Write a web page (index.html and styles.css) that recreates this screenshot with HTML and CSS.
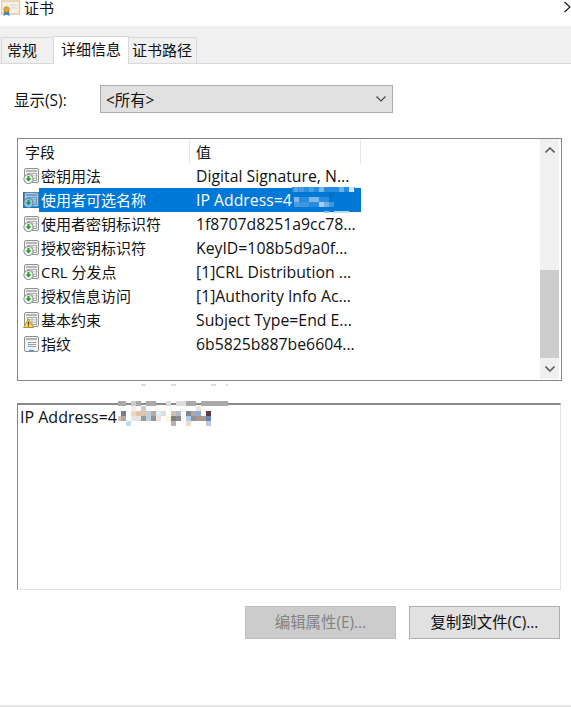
FILE: index.html
```html
<!DOCTYPE html>
<html lang="zh-CN">
<head>
    <meta charset="UTF-8">
    <meta name="viewport" content="width=device-width, initial-scale=1.0">
    <title>证书</title>
    <link rel="stylesheet" href="styles.css">
</head>
<body>

    <svg class="defs" width="0" height="0">
        <symbol id="doc" viewBox="0 0 16 16">
            <rect x="1.5" y="0.5" width="14" height="14" rx="1.5" fill="#f4f4f4" stroke="#8f8f8f"/>
            <rect x="3" y="2" width="11" height="2" fill="#b4b4b4"/>
            <rect x="4.5" y="5.5" width="9" height="7" fill="#fff" stroke="#a6a6a6"/>
            <path d="M4.5 7.8h9M4.5 10.2h9M9 5.5v7" stroke="#b4b4b4"/>
        </symbol>
        <symbol id="cert-ok" viewBox="0 0 16 16">
            <use href="#doc" width="16" height="16"/>
            <circle cx="5.5" cy="11" r="4.6" fill="#f2f7ef" stroke="#7f8a80"/>
            <path d="M5.5 7.8v3" stroke="#1f9a2e" stroke-width="2"/>
            <path d="M2.6 10.2h5.8L5.5 13.6z" fill="#1f9a2e"/>
        </symbol>
        <symbol id="cert-warn" viewBox="0 0 16 16">
            <use href="#doc" width="16" height="16"/>
            <path d="M5.5 6.8L10.4 15.5H0.6z" fill="#f8d648" stroke="#b8962a"/>
            <path d="M5.5 9.8v3M5.5 13.4v1.2" stroke="#333" stroke-width="1.2"/>
        </symbol>
        <symbol id="cert-plain" viewBox="0 0 16 16">
            <rect x="1.5" y="0.5" width="14" height="15" rx="1.5" fill="#f4f4f4" stroke="#8f8f8f"/>
            <rect x="3" y="2" width="11" height="2" fill="#b4b4b4"/>
            <path d="M5 6.5h8M5 8.5h8M5 10.5h8" stroke="#a0a0a0"/>
            <path d="M5 6.5h1M5 8.5h1M5 10.5h1" stroke="#38a8e0"/>
            <path d="M6 14.5h5" stroke="#38a8e0" stroke-width="1.4"/>
        </symbol>
    </svg>

    <header class="titlebar">
        <svg class="title-icon" width="20" height="16" viewBox="0 0 20 16">
            <rect x="0.5" y="1" width="18" height="13" fill="#f7f0e4" stroke="#e2c8a4" stroke-width="1.4"/>
            <path d="M9 5h7M9 8h7" stroke="#ddd" stroke-width="1.5"/>
            <path d="M3 11l-.5 5 3-1.5 3 1.5-.5-5z" fill="#3f7fc9"/>
            <circle cx="5.5" cy="9.5" r="2.8" fill="#e0a92a" stroke="#b57f1a" stroke-width=".6"/>
        </svg>
        <span class="title-text">证书</span>
        <svg class="close" width="7" height="12" viewBox="0 0 7 12">
            <path d="M0.5 1l5.5 5-5.5 5" fill="none" stroke="#111" stroke-width="1.1"/>
        </svg>
    </header>

    <nav class="tabs">
        <div class="tab">常规</div>
        <div class="tab active">详细信息</div>
        <div class="tab last">证书路径</div>
    </nav>

    <main class="content">
        <div class="show-row">
            <label class="show-label">显示(S):</label>
            <div class="select">
                <span>&lt;所有&gt;</span>
                <svg width="10" height="6" viewBox="0 0 10 6">
                    <path d="M0.5 0.5L5 5l4.5-4.5" fill="none" stroke="#444" stroke-width="1.1"/>
                </svg>
            </div>
        </div>

        <div class="list">
            <div class="list-body">
                <div class="list-head">
                    <div class="col-field">字段</div>
                    <div class="col-value">值</div>
                </div>
                <div class="row">
                    <svg class="row-icon"><use href="#cert-ok"/></svg>
                    <div class="col-field">密钥用法</div>
                    <div class="col-value">Digital Signature, N...</div>
                </div>
                <div class="row selected">
                    <svg class="row-icon"><use href="#cert-ok"/></svg>
                    <div class="cells">
                        <div class="col-field">使用者可选名称</div>
                        <div class="col-value">IP Address=4</div>
                    </div>
                </div>
                <div class="row">
                    <svg class="row-icon"><use href="#cert-ok"/></svg>
                    <div class="col-field">使用者密钥标识符</div>
                    <div class="col-value">1f8707d8251a9cc78...</div>
                </div>
                <div class="row">
                    <svg class="row-icon"><use href="#cert-ok"/></svg>
                    <div class="col-field">授权密钥标识符</div>
                    <div class="col-value">KeyID=108b5d9a0f...</div>
                </div>
                <div class="row">
                    <svg class="row-icon"><use href="#cert-ok"/></svg>
                    <div class="col-field">CRL 分发点</div>
                    <div class="col-value">[1]CRL Distribution ...</div>
                </div>
                <div class="row">
                    <svg class="row-icon"><use href="#cert-ok"/></svg>
                    <div class="col-field">授权信息访问</div>
                    <div class="col-value">[1]Authority Info Ac...</div>
                </div>
                <div class="row">
                    <svg class="row-icon"><use href="#cert-warn"/></svg>
                    <div class="col-field">基本约束</div>
                    <div class="col-value">Subject Type=End E...</div>
                </div>
                <div class="row">
                    <svg class="row-icon"><use href="#cert-plain"/></svg>
                    <div class="col-field">指纹</div>
                    <div class="col-value">6b5825b887be6604...</div>
                </div>
            </div>
            <div class="scrollbar">
                <div class="arrow">
                    <svg width="10" height="6" viewBox="0 0 10 6"><path d="M0.5 5.5L5 1l4.5 4.5" fill="none" stroke="#606060" stroke-width="1.6"/></svg>
                </div>
                <div class="track"></div>
                <div class="thumb"></div>
                <div class="arrow">
                    <svg width="10" height="6" viewBox="0 0 10 6"><path d="M0.5 0.5L5 5l4.5-4.5" fill="none" stroke="#606060" stroke-width="1.6"/></svg>
                </div>
            </div>
        </div>

        <div class="detail">IP Address=4</div>

        <div class="actions">
            <button class="btn" disabled>编辑属性(E)...</button>
            <button class="btn">复制到文件(C)...</button>
        </div>
    </main>

    <!-- blurred out parts of the address -->
    <svg class="mosaic mosaic-row" width="64" height="27" viewBox="0 0 64 27">
        <rect x="0" y="0" width="63" height="5" fill="#2a8cdc"/>
        <rect x="2" y="0" width="4" height="5" fill="#5aa5e3"/>
        <rect x="7" y="0" width="5" height="5" fill="#4a9de0"/>
        <rect x="17" y="0" width="5" height="5" fill="#4a9de0"/>
        <rect x="27" y="0" width="5" height="5" fill="#7db8e8"/>
        <rect x="47" y="0" width="5" height="5" fill="#6eb0e6"/>
        <rect x="57" y="0" width="5" height="5" fill="#cfe3f4"/>
        <rect x="37" y="5" width="5" height="5" fill="#0f6cc4"/>
        <rect x="2" y="10" width="5" height="5" fill="#7db8e8"/>
        <rect x="7" y="10" width="10" height="5" fill="#2a8cdc"/>
        <rect x="17" y="10" width="10" height="5" fill="#7db8e8"/>
        <rect x="27" y="10" width="10" height="5" fill="#2a8cdc"/>
        <rect x="2" y="15" width="5" height="5" fill="#4a9de0"/>
        <rect x="7" y="15" width="10" height="5" fill="#3f96de"/>
        <rect x="17" y="15" width="10" height="5" fill="#2a8cdc"/>
        <rect x="27" y="15" width="5" height="5" fill="#a8cdee"/>
        <rect x="32" y="15" width="5" height="5" fill="#6eb0e6"/>
        <rect x="37" y="15" width="5" height="5" fill="#3f96de"/>
        <rect x="32" y="24" width="5" height="2" fill="#8cc0ea"/>
        <rect x="42" y="24" width="15" height="2" fill="#bcdcf2"/>
    </svg>
    <svg class="mosaic mosaic-detail" width="112" height="45" viewBox="0 0 112 45">
        <g fill="#dcdcdc">
            <rect x="23" y="0" width="5" height="2"/>
            <rect x="53" y="0" width="5" height="2"/>
            <rect x="93" y="0" width="5" height="2"/>
            <rect x="108" y="0" width="2" height="2"/>
        </g>
        <rect x="0" y="17" width="8" height="5" fill="#a9a9a9"/>
        <rect x="13" y="17" width="5" height="5" fill="#cccccc"/>
        <rect x="18" y="17" width="5" height="5" fill="#a9a9a9"/>
        <rect x="28" y="17" width="10" height="5" fill="#a9a9a9"/>
        <rect x="48" y="17" width="5" height="5" fill="#dddddd"/>
        <rect x="58" y="17" width="10" height="5" fill="#dddddd"/>
        <rect x="68" y="17" width="10" height="5" fill="#a9a9a9"/>
        <rect x="83" y="17" width="27" height="5" fill="#a9a9a9"/>
        <rect x="13" y="22" width="5" height="5" fill="#f5efe6"/>
        <rect x="23" y="22" width="5" height="5" fill="#cccccc"/>
        <rect x="78" y="22" width="5" height="5" fill="#efe4d6"/>
        <rect x="3" y="27" width="5" height="5" fill="#777f85"/>
        <rect x="13" y="27" width="5" height="5" fill="#e9d9c8"/>
        <rect x="18" y="27" width="10" height="5" fill="#e3c4a8"/>
        <rect x="28" y="27" width="5" height="5" fill="#bcd0e0"/>
        <rect x="33" y="27" width="5" height="5" fill="#b5aaa0"/>
        <rect x="38" y="27" width="5" height="5" fill="#dcefff"/>
        <rect x="43" y="27" width="5" height="5" fill="#e0dcd6"/>
        <rect x="53" y="27" width="5" height="5" fill="#d8bcb0"/>
        <rect x="58" y="27" width="5" height="5" fill="#aebbc8"/>
        <rect x="68" y="27" width="5" height="5" fill="#7c8a92"/>
        <rect x="73" y="27" width="5" height="5" fill="#a8a8a8"/>
        <rect x="78" y="27" width="5" height="5" fill="#8fa8d4"/>
        <rect x="88" y="27" width="5" height="5" fill="#5a3d4e"/>
        <rect x="0" y="32" width="3" height="5" fill="#d9c7a8"/>
        <rect x="3" y="32" width="5" height="5" fill="#aaaaaa"/>
        <rect x="13" y="32" width="10" height="5" fill="#e4e4e4"/>
        <rect x="23" y="32" width="5" height="5" fill="#999999"/>
        <rect x="28" y="32" width="5" height="5" fill="#bcd0e0"/>
        <rect x="33" y="32" width="5" height="5" fill="#8a9499"/>
        <rect x="38" y="32" width="5" height="5" fill="#f3e2d8"/>
        <rect x="48" y="32" width="5" height="5" fill="#fbf6dc"/>
        <rect x="53" y="32" width="5" height="5" fill="#83807c"/>
        <rect x="58" y="32" width="5" height="5" fill="#8a8a92"/>
        <rect x="68" y="32" width="5" height="5" fill="#a8d0ea"/>
        <rect x="73" y="32" width="5" height="5" fill="#8a949c"/>
        <rect x="78" y="32" width="10" height="5" fill="#a89888"/>
        <rect x="88" y="32" width="5" height="5" fill="#6a84ac"/>
        <rect x="8" y="37" width="5" height="5" fill="#bcdcf2"/>
        <rect x="53" y="37" width="5" height="5" fill="#bfb0a8"/>
        <rect x="68" y="37" width="5" height="5" fill="#ecdcc8"/>
        <rect x="88" y="37" width="5" height="5" fill="#b8c8e0"/>
    </svg>

</body>
</html>
```

FILE: styles.css
```css
* {
    margin: 0;
    padding: 0;
    box-sizing: border-box;
}

body {
    position: relative;
    width: 571px;
    height: 707px;
    background: #fff;
    overflow: hidden;
    color: #111;
    font-family: "Open Sans", "Noto Sans CJK SC", sans-serif;
    font-size: 15px;
    border-bottom: 2px solid #e6e6e6;
}

.defs {
    position: absolute;
}

.titlebar {
    display: flex;
    align-items: flex-start;
    height: 26px;
}

.title-icon {
    margin-left: 1px;
}

.title-text {
    margin-left: 3px;
    line-height: 16px;
}

.close {
    margin-left: auto;
    margin-top: 1px;
}

.tabs {
    display: flex;
    align-items: flex-end;
    height: 38px;
    padding-left: 1px;
    background: #f0f0f0;
    border-bottom: 1px solid #d9d9d9;
}

.tab {
    width: 53px;
    height: 26px;
    padding-left: 5px;
    line-height: 24px;
    background: #f0f0f0;
    border: 1px solid #d9d9d9;
    border-bottom: none;
}

.tab.active {
    position: relative;
    height: 28px;
    width: 76px;
    margin-left: -1px;
    margin-bottom: -1px;
    padding-left: 7px;
    background: #fff;
    line-height: 25px;
}

.tab.last {
    width: 69px;
    margin-left: -1px;
    padding-left: 3px;
}

.content {
    padding: 21px 10px 0 17px;
}

.show-row {
    display: flex;
    align-items: center;
    margin-left: -3px;
}

.show-label {
    width: 86px;
    font-size: 15.5px;
}

.select {
    display: flex;
    align-items: center;
    justify-content: space-between;
    width: 293px;
    height: 28px;
    padding: 0 6px 0 5px;
    font-size: 15.4px;
    background: #e1e1e1;
    border: 1px solid #adadad;
}

.list {
    display: flex;
    width: 545px;
    height: 243px;
    margin-top: 25px;
    border: 1px solid #828790;
}

.list-body {
    flex: 1;
    padding-top: 1px;
}

.list-head {
    display: flex;
    height: 24px;
    line-height: 24px;
}

.list-head .col-field {
    width: 172px;
    padding-left: 7px;
    border-right: 1px solid #e5e5e5;
}

.list-head .col-value {
    width: 171px;
    padding-left: 6px;
    border-right: 1px solid #e5e5e5;
    font-size: 15px;
}

.row {
    display: flex;
    align-items: center;
    height: 24px;
    padding-left: 5px;
    white-space: nowrap;
}

.row-icon {
    width: 16px;
    height: 16px;
    flex: none;
}

.selected .row-icon {
    background: #0078d7;
}

.selected .row-icon use {
    opacity: 0.65;
}

.row .col-field {
    width: 157px;
    padding-left: 2px;
    padding-bottom: 2px;
}

.row .col-value {
    font-size: 15.8px;
}

.cells {
    display: flex;
    align-items: center;
    width: 322px;
    height: 24px;
    background: #0078d7;
    color: #fff;
}

.scrollbar {
    display: flex;
    flex-direction: column;
    width: 19px;
    margin: 0 2px 1px 0;
    background: #f0f0f0;
}

.arrow {
    display: flex;
    align-items: center;
    justify-content: center;
    height: 21px;
    flex: none;
}

.track {
    flex: 1;
}

.thumb {
    height: 88px;
    flex: none;
    background: #cdcdcd;
}

.detail {
    width: 544px;
    height: 187px;
    margin-top: 22px;
    padding: 0 2px;
    font-size: 16px;
    line-height: 24px;
    border-style: solid;
    border-width: 2px 1px 1px 1px;
    border-color: #8a8a8a #e3e3e3 #e3e3e3 #8a8a8a;
}

.actions {
    display: flex;
    justify-content: flex-end;
    gap: 13px;
    margin-top: 16px;
    padding-right: 1px;
}

.btn {
    width: 151px;
    height: 33px;
    padding-bottom: 2px;
    font: inherit;
    font-size: 15.4px;
    color: #111;
    background: #e1e1e1;
    border: 1px solid #adadad;
}

.btn:disabled {
    color: #838383;
    background: #cccccc;
    border-color: #bfbfbf;
}

.mosaic {
    position: absolute;
}

.mosaic-row {
    left: 292px;
    top: 187px;
}

.mosaic-detail {
    left: 118px;
    top: 384px;
}
```
